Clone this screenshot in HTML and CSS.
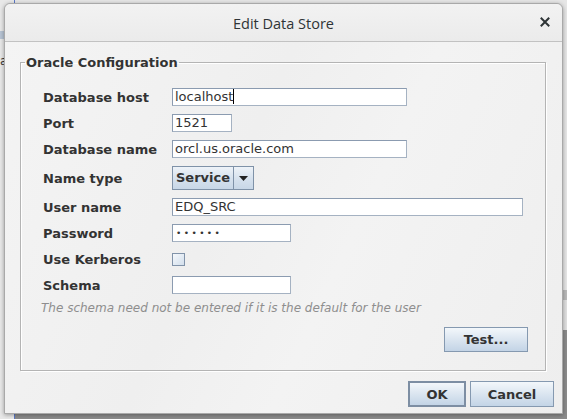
FILE: index.html
```html
<!DOCTYPE html>
<html>
<head>
<meta charset="utf-8">
<link rel="stylesheet" href="styles.css">
</head>
<body>
<div class="desk">
  <div class="bg-left"><span class="bg-c"></span><span class="bg-a">a</span></div>
  <div class="dialog">
    <div class="titlebar">
      <span class="title">Edit Data Store</span>
      <svg class="close" width="10" height="10" viewBox="0 0 10 10"><path d="M1.5 1.5 L8.5 8.5 M8.5 1.5 L1.5 8.5" stroke="#2e3436" stroke-width="2" stroke-linecap="square"/></svg>
    </div>
    <div class="body">
      <fieldset class="group">
        <legend>Oracle Configuration</legend>
        <div class="form">
          <label>Database host</label>
          <div class="field w235"><span class="caret">localhost</span></div>
          <label>Port</label>
          <div class="field w60">1521</div>
          <label>Database name</label>
          <div class="field w235">orcl.us.oracle.com</div>
          <label>Name type</label>
          <div class="combo"><span class="combo-val">Service</span><span class="combo-arrow"><svg width="9" height="5" viewBox="0 0 9 5"><path d="M0 0 H9 L4.5 5 Z" fill="#222"/></svg></span></div>
          <label>User name</label>
          <div class="field w351">EDQ_SRC</div>
          <label>Password</label>
          <div class="field w119"><span class="dots">••••••</span></div>
          <label>Use Kerberos</label>
          <div class="cbrow"><span class="checkbox"></span></div>
          <label>Schema</label>
          <div class="field w119"></div>
          <p class="hint">The schema need not be entered if it is the default for the user</p>
        </div>
        <div class="test-row"><button class="btn test">Test...</button></div>
      </fieldset>
      <div class="footer">
        <button class="btn ok">OK</button>
        <button class="btn cancel">Cancel</button>
      </div>
    </div>
  </div>
</div>
</body>
</html>
```
FILE: styles.css
```css
html, body {
  margin: 0;
  padding: 0;
}
body {
  background: #e4e4e4;
  width: 567px;
  height: 419px;
  overflow: hidden;
  font-family: "DejaVu Sans", sans-serif;
}
.desk {
  position: relative;
  width: 567px;
  height: 419px;
  padding: 3px 0 0 4px;
  box-sizing: border-box;
  background: linear-gradient(to bottom, #e6e6e6 0, #e6e6e6 290px, #b9b9b9 290px, #b9b9b9 300px, #e0e0e0 300px, #e0e0e0 330px, #8c8c8c 330px);
}
.bg-left {
  position: absolute;
  left: 0;
  top: 0;
  width: 14px;
  height: 419px;
  background: #e8e8e8;
  border-right: 1px solid #5a78c8;
}
.bg-c {
  position: absolute;
  left: 0;
  top: 31px;
  width: 6px;
  height: 8px;
  background: #b7c4d4;
}
.bg-a {
  position: absolute;
  left: 0;
  top: 54px;
  font-size: 12px;
  color: #333;
}
.dialog {
  position: relative;
  width: 559px;
  height: 411px;
  box-sizing: border-box;
  border: 1px solid #a9a9a9;
  border-radius: 6px 6px 0 0;
  background: #f2f2f2;
  box-shadow: 0 1px 4px rgba(0, 0, 0, 0.35);
  display: flex;
  flex-direction: column;
}
.titlebar {
  height: 37px;
  border-bottom: 1px solid #c2c2c2;
  border-radius: 6px 6px 0 0;
  background: linear-gradient(to bottom, #f2f2f2, #ebebeb);
  display: flex;
  align-items: center;
  justify-content: center;
  position: relative;
}
.title {
  font-family: "Open Sans", "Noto Sans", sans-serif;
  font-size: 14.5px;
  color: #2e3436;
  margin-top: 1px;
}
.close {
  position: absolute;
  right: 12px;
  top: 13px;
}
.body {
  flex: 1;
  padding: 0 16px 0 15px;
  display: flex;
  flex-direction: column;
  background: linear-gradient(115deg, #f4f4f4 0%, #efefef 40%, #f3f3f3 60%, #eeeeee 100%);
}
.group {
  margin: 13px 0 0 0;
  padding: 18px 17px 18px 22px;
  border: 1px solid #b4b4b4;
  box-shadow: inset 1px 1px 0 #ffffff, 1px 1px 0 #ffffff;
  min-width: 0;
}
.group legend {
  font-weight: bold;
  font-size: 13px;
  line-height: 15px;
  color: #333;
  padding: 0 1px;
  margin-left: -18px;
}
.form {
  display: grid;
  grid-template-columns: 129px auto;
  row-gap: 8px;
  align-items: center;
  justify-items: start;
}
.form label {
  font-weight: bold;
  font-size: 13px;
  color: #333;
}
.field {
  height: 18px;
  box-sizing: border-box;
  background: #fff;
  border: 1px solid #a5b2c2;
  border-top-color: #8b9bb0;
  border-left-color: #8b9bb0;
  font-size: 13px;
  line-height: 16px;
  color: #333;
  padding-left: 2px;
  white-space: nowrap;
  overflow: hidden;
}
.w235 { width: 235px; }
.w60 { width: 60px; }
.w351 { width: 351px; }
.w119 { width: 119px; }
.caret {
  border-right: 1px solid #000;
  padding-right: 0;
}
.dots {
  font-size: 9px;
  letter-spacing: 2.4px;
  position: relative;
  top: -1px;
  padding-left: 1px;
}
.combo {
  display: flex;
  height: 24px;
  width: 82px;
  box-sizing: border-box;
  border: 1px solid #7f92a8;
  background: linear-gradient(to bottom, #eef3f8, #d7e2ee 50%, #c8d7e7);
}
.combo-val {
  width: 61px;
  border-right: 1px solid #7f92a8;
  font-weight: bold;
  font-size: 13px;
  line-height: 22px;
  color: #333;
  padding-left: 3px;
  box-sizing: border-box;
}
.combo-arrow {
  flex: 1;
  display: flex;
  align-items: center;
  justify-content: center;
}
.cbrow {
  height: 18px;
  display: flex;
  align-items: center;
}
.checkbox {
  width: 13px;
  height: 13px;
  box-sizing: border-box;
  border: 1px solid #8193a9;
  background: linear-gradient(135deg, #f5f8fb, #d3dfec);
}
.hint {
  grid-column: 1 / 3;
  margin: 0 0 0 -2px;
  font-family: "DejaVu Sans", sans-serif;
  font-style: italic;
  font-size: 12px;
  line-height: 13px;
  color: #8e8e8e;
}
.test-row {
  display: flex;
  justify-content: flex-end;
  margin-top: 12px;
}
.btn {
  font-family: "DejaVu Sans", sans-serif;
  font-weight: bold;
  font-size: 13px;
  color: #333;
  border: 1px solid #8599b0;
  background: linear-gradient(to bottom, #f3f7fb, #dde7f1 45%, #c3d4e6);
  padding: 0;
  margin: 0;
  box-sizing: border-box;
}
.test {
  width: 84px;
  height: 25px;
}
.footer {
  display: flex;
  justify-content: flex-end;
  gap: 4px;
  margin-top: 10px;
  margin-right: -8px;
}
.ok {
  width: 58px;
  height: 26px;
  border: 2px solid #7d8ea3;
}
.cancel {
  width: 84px;
  height: 26px;
}
```
